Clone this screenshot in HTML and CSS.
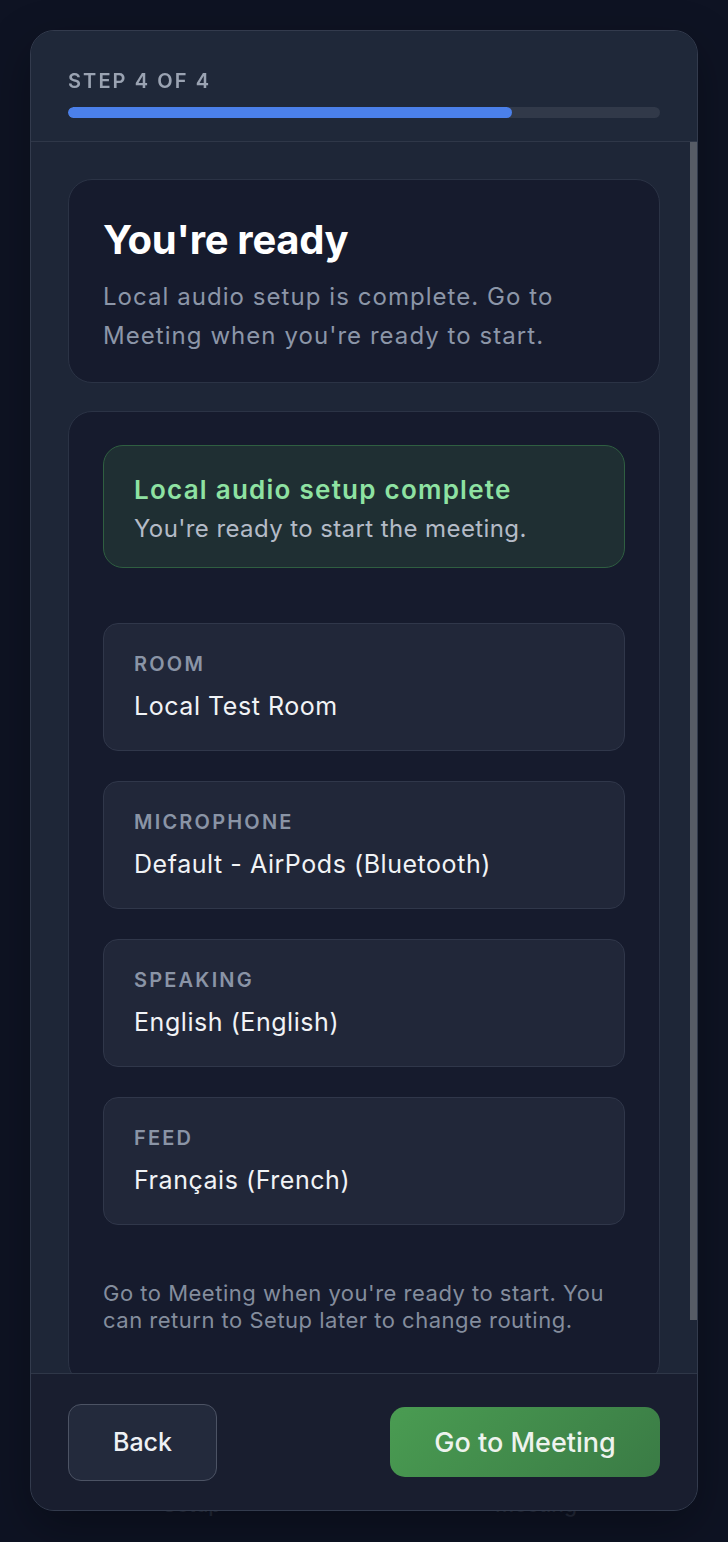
FILE: index.html
```html
<!DOCTYPE html>
<html lang="en">
<head>
<meta charset="utf-8">
<title>Setup – Step 4 of 4</title>
<link rel="stylesheet" href="styles.css">
</head>
<body>
  <div class="page">
    <div class="page-main"></div>
    <nav class="tabbar">
      <span class="tab">Setup</span>
      <span class="tab">Meeting</span>
    </nav>
  </div>

  <div class="modal" role="dialog" aria-label="Setup wizard">
    <header class="modal-head">
      <div class="step">STEP 4 OF 4</div>
      <div class="progress"><div class="progress-fill"></div></div>
    </header>

    <div class="modal-body">
      <section class="card intro">
        <h1 class="title">You're ready</h1>
        <p class="lead">Local audio setup is complete. Go to Meeting when you're ready to start.</p>
      </section>

      <section class="card summary">
        <div class="notice">
          <div class="notice-title">Local audio setup complete</div>
          <div class="notice-text">You're ready to start the meeting.</div>
        </div>

        <div class="rows">
          <div class="row">
            <div class="row-label">ROOM</div>
            <div class="row-value">Local Test Room</div>
          </div>
          <div class="row">
            <div class="row-label">MICROPHONE</div>
            <div class="row-value">Default - AirPods (Bluetooth)</div>
          </div>
          <div class="row">
            <div class="row-label">SPEAKING</div>
            <div class="row-value">English (English)</div>
          </div>
          <div class="row">
            <div class="row-label">FEED</div>
            <div class="row-value">Français (French)</div>
          </div>
        </div>

        <p class="note">Go to Meeting when you're ready to start. You can return to Setup later to change routing.</p>
      </section>
    </div>
    <div class="scroll-thumb" aria-hidden="true"></div>

    <footer class="modal-foot">
      <button class="btn btn-back" type="button">Back</button>
      <button class="btn btn-go" type="button">Go to Meeting</button>
    </footer>
  </div>
</body>
</html>
```

FILE: styles.css
```css
* { box-sizing: border-box; }

html, body {
  margin: 0;
  padding: 0;
  height: 100%;
}

body {
  background: #0e1323;
  font-family: Inter, "Noto Sans", "Liberation Sans", sans-serif;
  color: #f1f3f6;
  overflow: hidden;
}

/* underlying page (mostly hidden by the modal) */
.page {
  height: 100vh;
  display: flex;
  flex-direction: column;
}
.page-main { flex: 1; }
.tabbar {
  display: grid;
  grid-template-columns: 1fr 1fr;
  padding: 0 20px 24px;
}
.tab {
  text-align: center;
  font-size: 21px;
  line-height: 26px;
  font-weight: 500;
  color: #242a3a;
}

/* modal */
.modal {
  position: fixed;
  top: 30px;
  left: 30px;
  width: 668px;
  height: 1481px;
  display: flex;
  flex-direction: column;
  background: #1e2637;
  border: 1px solid #333b4d;
  border-radius: 24px;
  overflow: hidden;
  box-shadow: 0 16px 48px rgba(0, 0, 0, 0.3);
}

.modal-head {
  padding: 38px 37px 23px;
  background: #1f2839;
  border-bottom: 1px solid #2f3748;
  flex: none;
}
.step {
  font-size: 20px;
  line-height: 24px;
  font-weight: 600;
  letter-spacing: 2.1px;
  color: #9aa3b2;
}
.progress {
  margin-top: 14px;
  height: 11px;
  border-radius: 6px;
  background: #313949;
  overflow: hidden;
}
.progress-fill {
  width: 75%;
  height: 100%;
  border-radius: 6px;
  background: #4b80ea;
}

.modal-body {
  flex: 1;
  min-height: 0;
  overflow-y: auto;
  scrollbar-width: none;
  padding: 37px 37px 40px 37px;
  background: #1e2637;
  display: flex;
  flex-direction: column;
  gap: 28px;
}
.modal-body::-webkit-scrollbar { display: none; }

/* overlay scrollbar thumb of the scrolling body */
.scroll-thumb {
  position: absolute;
  top: 111px;
  right: 0;
  width: 7px;
  height: 1178px;
  background: #575c66;
}

.card {
  background: #161b2d;
  border: 1px solid #2b3345;
  border-radius: 24px;
  flex: none;
}

.intro {
  padding: 36px 34px 27px;
}
.title {
  margin: 0;
  font-size: 40px;
  line-height: 48px;
  font-weight: 700;
  color: #ffffff;
  letter-spacing: -0.3px;
}
.lead {
  margin: 13px 0 0;
  font-size: 24px;
  line-height: 39px;
  letter-spacing: 1.05px;
  color: #8c96a8;
}

.summary {
  padding: 33px 34px 51px 34px;
  display: flex;
  flex-direction: column;
}

.notice {
  background: #1f2f33;
  border: 1px solid #2f5f41;
  border-radius: 20px;
  padding: 28px 30px 23px;
}
.notice-title {
  font-size: 26px;
  line-height: 32px;
  font-weight: 600;
  letter-spacing: 1.25px;
  color: #8ee2a2;
}
.notice-text {
  margin-top: 8px;
  font-size: 24px;
  line-height: 30px;
  letter-spacing: 0.4px;
  color: #b4bbc7;
}

.rows {
  margin-top: 55px;
  display: flex;
  flex-direction: column;
  gap: 30px;
}
.row {
  height: 128px;
  background: #212739;
  border: 1px solid #30374a;
  border-radius: 15px;
  padding: 28px 30px 0;
}
.row-label {
  font-size: 20px;
  line-height: 24px;
  font-weight: 600;
  letter-spacing: 2.2px;
  color: #8a94a6;
}
.row-value {
  margin-top: 15px;
  font-size: 25px;
  line-height: 30px;
  letter-spacing: 0.55px;
  color: #f1f3f6;
}

.note {
  margin: 55px 0 0;
  font-size: 22px;
  line-height: 27px;
  letter-spacing: 0.5px;
  color: #848d9d;
}

.modal-foot {
  flex: none;
  height: 137px;
  border-top: 1px solid #2f3748;
  background: #191e2f;
  padding: 0 37px;
  display: flex;
  align-items: center;
  justify-content: space-between;
}
.btn {
  font-family: Inter, "Noto Sans", "Liberation Sans", sans-serif;
  cursor: pointer;
  font-weight: 500;
}
.btn-back {
  width: 149px;
  height: 77px;
  border-radius: 13px;
  border: 1.5px solid #4c5364;
  background: #232a3c;
  color: #eef1f5;
  font-size: 25px;
}
.btn-go {
  width: 270px;
  height: 70px;
  border-radius: 15px;
  border: none;
  background: linear-gradient(135deg, #4a9c52 0%, #3a7b45 100%);
  color: #eef3ee;
  font-size: 27px;
}
```
